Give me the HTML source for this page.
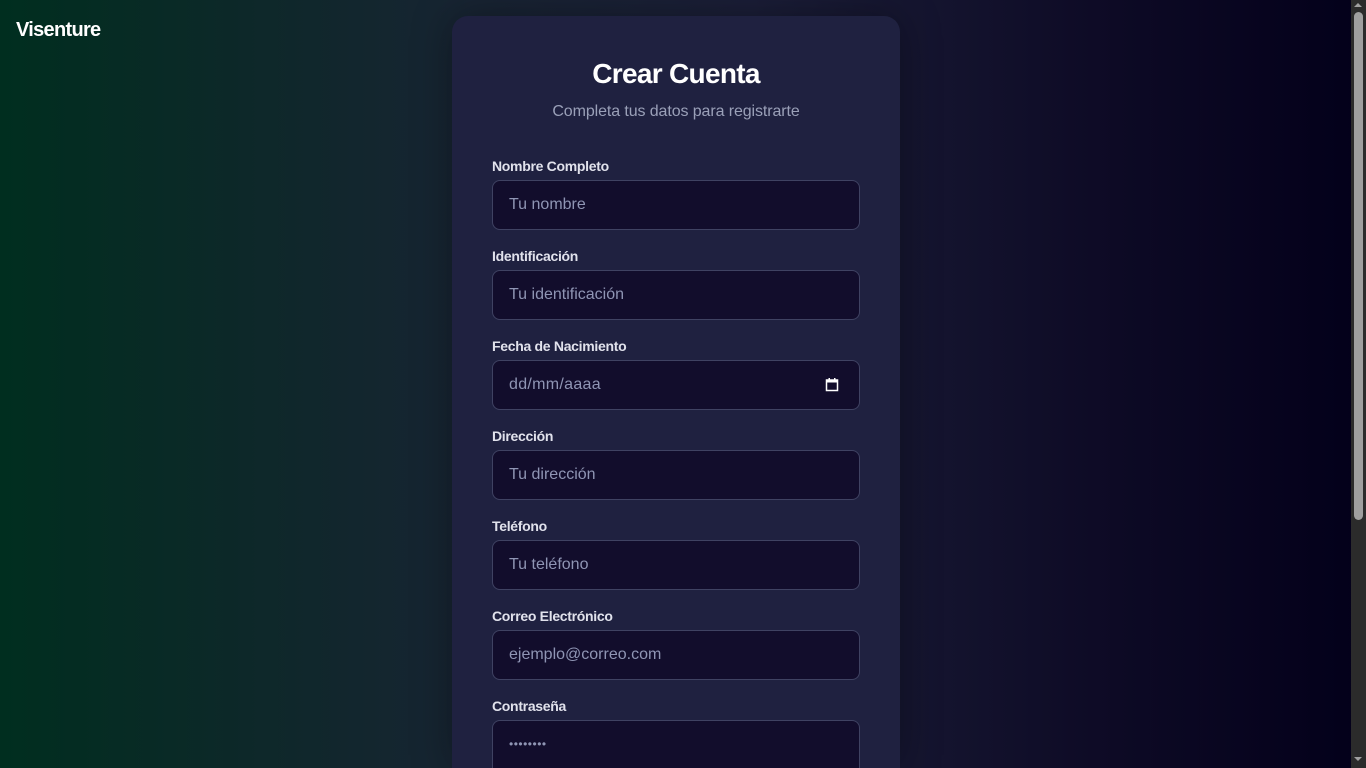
<!DOCTYPE html>
<html><head><meta charset="utf-8"><style>
*{margin:0;padding:0;box-sizing:border-box}
html,body{width:1366px;height:768px;overflow:hidden}
body{font-family:"Liberation Sans",Roboto,sans-serif;background:linear-gradient(90deg,#002e1f 0%,#0d2829 18%,#182433 35%,#1b1e38 55%,#0e0b26 80%,#03001a 100%);position:relative;color:#fff}
.logo{position:absolute;left:16px;top:19px;font-size:20px;font-weight:bold;letter-spacing:-0.7px}
.card{position:absolute;left:452px;top:16px;width:448px;height:752px;background:#1f2140;border-radius:16px 16px 0 0;box-shadow:0 0 40px rgba(0,0,0,.35)}
h1{position:absolute;left:452px;width:448px;top:56px;text-align:center;font-size:28px;font-weight:bold;letter-spacing:-0.7px;line-height:36px}
.sub{position:absolute;left:452px;width:448px;top:102px;text-align:center;font-size:16px;color:#9aa0b8;line-height:20px;letter-spacing:-0.1px}
.lab{position:absolute;left:492px;font-size:14px;font-weight:bold;color:#e1e2ec;line-height:16px;letter-spacing:-0.3px}
.inp{position:absolute;left:492px;width:368px;height:50px;background:#120d2c;border:1px solid #3f4262;border-radius:8px;color:#8f95b4;font-size:16px;line-height:48px;padding-left:16px}
.sb{position:absolute;left:1351px;top:0;width:15px;height:768px;background:#2b2b2b}
.th{position:absolute;left:1354px;top:12px;width:9px;height:508px;background:#9f9f9f;border-radius:5px}
.ar{position:absolute;left:1354px;width:0;height:0;border-left:4.5px solid transparent;border-right:4.5px solid transparent}
</style></head><body>
<div class="logo">Visenture</div>
<div class="card"></div>
<h1>Crear Cuenta</h1>
<div class="sub">Completa tus datos para registrarte</div>

<div class="lab" style="top:158px">Nombre Completo</div>
<div class="inp" style="top:180px">Tu nombre</div>
<div class="lab" style="top:248px">Identificación</div>
<div class="inp" style="top:270px">Tu identificación</div>
<div class="lab" style="top:338px">Fecha de Nacimiento</div>
<div class="inp" style="top:360px;letter-spacing:0.3px">dd/mm/aaaa
<svg style="position:absolute;left:332px;top:16px" width="14" height="15" viewBox="0 0 14 15"><rect x="1.5" y="3" width="11" height="10.5" fill="none" stroke="#fff" stroke-width="1.5"/><rect x="1.5" y="3" width="11" height="2.5" fill="#fff"/><rect x="3.5" y="1" width="1.5" height="2.5" fill="#fff"/><rect x="9" y="1" width="1.5" height="2.5" fill="#fff"/></svg></div>
<div class="lab" style="top:428px">Dirección</div>
<div class="inp" style="top:450px">Tu dirección</div>
<div class="lab" style="top:518px">Teléfono</div>
<div class="inp" style="top:540px">Tu teléfono</div>
<div class="lab" style="top:608px">Correo Electrónico</div>
<div class="inp" style="top:630px">ejemplo@correo.com</div>
<div class="lab" style="top:698px">Contraseña</div>
<div class="inp" style="top:720px;height:48px;border-bottom:none;border-radius:8px 8px 0 0;font-size:12px;letter-spacing:0.5px;line-height:46px">••••••••</div>

<div class="sb"></div>
<div class="th"></div>
<div class="ar" style="top:3px;border-bottom:4.5px solid #a0a0a0"></div>
<div class="ar" style="top:757px;border-top:4.5px solid #a0a0a0"></div>
</body></html>
